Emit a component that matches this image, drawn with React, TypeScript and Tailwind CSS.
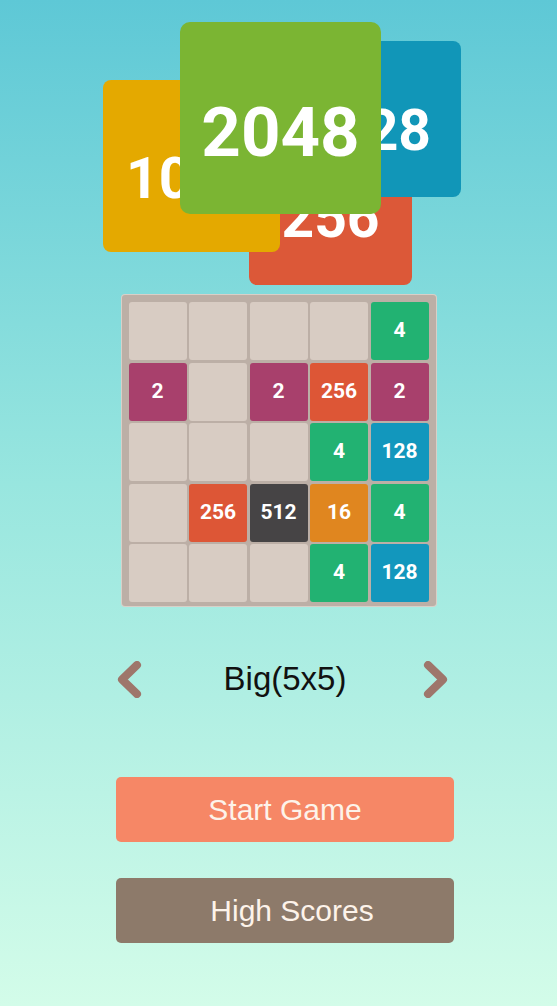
import React from "react";

const tileColor: Record<number, string> = {
  2: "bg-[#a8406c]",
  4: "bg-[#22b272]",
  16: "bg-[#e0861f]",
  128: "bg-[#1297bd]",
  256: "bg-[#dd5636]",
  512: "bg-[#464445]",
};

const grid: (number | null)[][] = [
  [null, null, null, null, 4],
  [2, null, 2, 256, 2],
  [null, null, null, 4, 128],
  [null, 256, 512, 16, 4],
  [null, null, null, 4, 128],
];

function Chevron({ dir }: { dir: "left" | "right" }) {
  const pts = dir === "left" ? "20,4 5,18.5 20,33" : "5,4 20,18.5 5,33";
  return (
    <svg width="25" height="37" viewBox="0 0 25 37">
      <polyline
        points={pts}
        fill="none"
        stroke="#9e766b"
        strokeWidth="8"
        strokeLinecap="round"
        strokeLinejoin="round"
      />
    </svg>
  );
}

export default function App() {
  const tileFont = { fontFamily: "Roboto, 'Noto Sans', sans-serif" };
  return (
    <div
      className="w-full h-[1006px] overflow-hidden flex flex-col items-center bg-[linear-gradient(to_bottom,#5ec8d6_0%,#98e6df_48%,#d3fce9_100%)]"
      style={{ fontFamily: "'Liberation Sans', Arial, sans-serif" }}
    >
      {/* Logo */}
      <div className="relative w-full h-[285px] shrink-0" style={tileFont}>
        <div className="absolute left-[249px] top-[127px] w-[163px] h-[158px] rounded-[8px] bg-[#dc5838] flex items-center justify-center pt-[22px] text-white font-bold text-[57px] leading-none">
          256
        </div>
        <div className="absolute left-[303px] top-[41px] w-[158px] h-[156px] rounded-[8px] bg-[#1196b8] flex items-center justify-center pt-[22px] text-white font-bold text-[57px] leading-none">
          128
        </div>
        <div className="absolute left-[103px] top-[80px] w-[177px] h-[172px] rounded-[8px] bg-[#e4a900] flex items-center justify-center pt-[24px] text-white font-bold text-[57px] leading-none">
          1024
        </div>
        <div className="absolute left-[180px] top-[22px] w-[201px] h-[192px] rounded-[10px] bg-[#7bb533] flex items-center justify-center pt-[28px] text-white font-bold text-[69px] leading-none">
          2048
        </div>
      </div>

      {/* Board */}
      <div className="mt-[10px] w-[314px] h-[311px] rounded-[3px] bg-[#bcafa6] pt-[7px] pb-[4px] px-[7px] shadow-[0_0_0_1px_#d8d0c8]">
        <div className="grid grid-cols-5 grid-rows-5 gap-[2.5px] w-full h-full" style={tileFont}>
          {grid.flat().map((v, i) => (
            <div
              key={i}
              className={`rounded-[3px] flex items-center justify-center text-white font-bold text-[21px] ${
                v ? tileColor[v] : "bg-[#d8ccc3]"
              }`}
            >
              {v ?? ""}
            </div>
          ))}
        </div>
      </div>

      {/* Mode selector */}
      <div className="mt-[53px] w-[331px] ml-[8px] flex items-center justify-between h-[40px]">
        <Chevron dir="left" />
        <span className="text-[33px] text-[#111] leading-none ml-[5px] -mt-[2px]">Big(5x5)</span>
        <Chevron dir="right" />
      </div>

      {/* Buttons */}
      <button className="mt-[78px] ml-[13px] w-[338px] h-[65px] rounded-[5px] bg-[#f68766] text-[#fdf3ea] text-[30px] flex items-center justify-center">
        Start Game
      </button>
      <button className="mt-[36px] ml-[13px] w-[338px] h-[65px] rounded-[5px] bg-[#8d7a6a] text-[#fdf3ea] text-[30px] flex items-center justify-center pl-[14px]">
        High Scores
      </button>
    </div>
  );
}
